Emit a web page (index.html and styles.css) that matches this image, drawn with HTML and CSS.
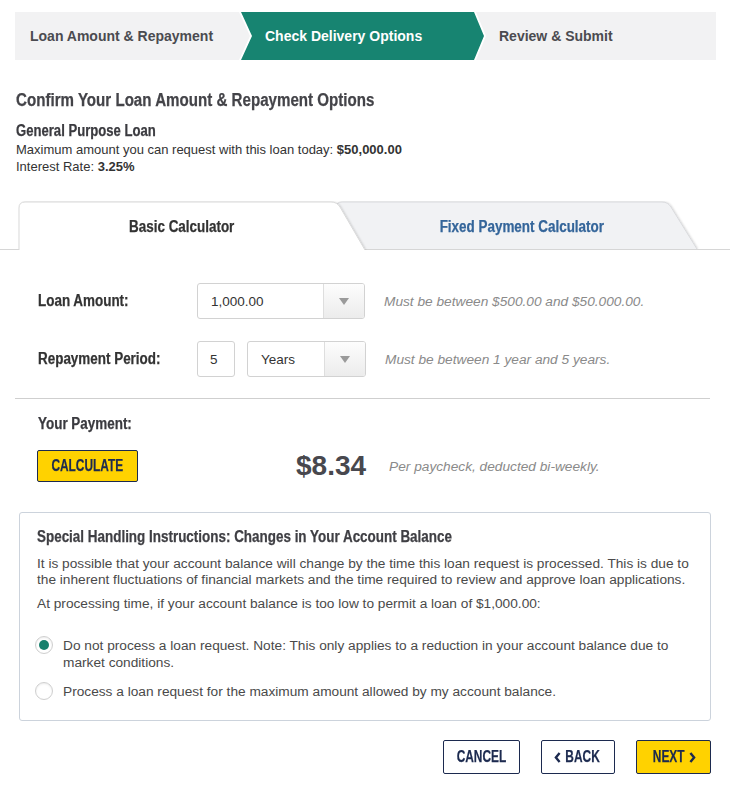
FILE: index.html
```html
<!DOCTYPE html>
<html lang="en">
<head>
<meta charset="utf-8">
<title>Loan Request</title>
<link rel="stylesheet" href="styles.css">
</head>
<body>
<div class="page">
  <nav class="steps">
    <div class="step step-first">Loan Amount &amp; Repayment</div>
    <div class="step-active"><div class="step-active-inner">Check Delivery Options</div></div>
    <div class="step step-last">Review &amp; Submit</div>
  </nav>

  <section class="intro">
    <h1 class="title cond">Confirm Your Loan Amount &amp; Repayment Options</h1>
    <h2 class="loan-name cond">General Purpose Loan</h2>
    <p class="info info-first">Maximum amount you can request with this loan today: <b>$50,000.00</b></p>
    <p class="info">Interest Rate: <b>3.25%</b></p>
  </section>

  <div class="tabs">
    <svg class="tabs-bg" width="730" height="49" viewBox="0 0 730 49" aria-hidden="true">
      <defs>
        <filter id="sh" x="-5%" y="-20%" width="110%" height="140%">
          <feDropShadow dx="1" dy="0" stdDeviation="1.2" flood-color="#000" flood-opacity="0.18"/>
        </filter>
      </defs>
      <path d="M0 48.5H730" stroke="#dcdcdc" stroke-width="1"/>
      <path d="M336 48 V7 Q336 1 342 1 H662 Q668 1 671 6 L697 48 Z" fill="#f1f2f4" filter="url(#sh)"/>
      <path d="M336 48 V7 Q336 1 342 1 H662 Q668 1 671 6 L697 48" fill="none" stroke="#d9dadd" stroke-width="1"/>
      <path d="M0 48.5H19 M697 48.5H730 M340 48.5H697" stroke="#d6d6d6" stroke-width="1"/>
      <path d="M19 49 V7 Q19 1 25 1 H331 Q337 1 340 6 L365 49 Z" fill="#fff" filter="url(#sh)"/>
      <path d="M19 49 V7 Q19 1 25 1 H331 Q337 1 340 6 L365 49" fill="none" stroke="#dadada" stroke-width="1"/>
    </svg>
    <div class="tab tab-active"><span class="cond cond-c">Basic Calculator</span></div>
    <div class="tab tab-inactive"><span class="cond cond-c">Fixed Payment Calculator</span></div>
  </div>

  <section class="calc">
    <div class="form-row">
      <div class="form-label"><span class="cond">Loan Amount:</span></div>
      <div class="select select-wide">
        <span class="select-value">1,000.00</span>
        <span class="select-arrow"></span>
      </div>
      <div class="hint">Must be between $500.00 and $50.000.00.</div>
    </div>
    <div class="form-row form-row-2">
      <div class="form-label"><span class="cond">Repayment Period:</span></div>
      <div class="num-input">5</div>
      <div class="select select-narrow">
        <span class="select-value">Years</span>
        <span class="select-arrow"></span>
      </div>
      <div class="hint">Must be between 1 year and 5 years.</div>
    </div>
  </section>

  <hr class="divider">

  <section class="payment">
    <div class="payment-label"><span class="cond">Your Payment:</span></div>
    <div class="payment-row">
      <button class="btn btn-yellow btn-calc"><span class="cond cond-c btn-text">CALCULATE</span></button>
      <span class="amount">$8.34</span>
      <span class="amount-note">Per paycheck, deducted bi-weekly.</span>
    </div>
  </section>

  <section class="notice">
    <h3 class="notice-title"><span class="cond">Special Handling Instructions: Changes in Your Account Balance</span></h3>
    <p class="notice-text">It is possible that your account balance will change by the time this loan request is processed. This is due to the inherent fluctuations of financial markets and the time required to review and approve loan applications.</p>
    <p class="notice-text notice-text-2">At processing time, if your account balance is too low to permit a loan of $1,000.00:</p>
    <div class="radios">
      <label class="radio-row">
        <span class="radio radio-checked"></span>
        <span class="radio-text">Do not process a loan request. Note: This only applies to a reduction in your account balance due to market conditions.</span>
      </label>
      <label class="radio-row">
        <span class="radio"></span>
        <span class="radio-text">Process a loan request for the maximum amount allowed by my account balance.</span>
      </label>
    </div>
  </section>

  <div class="actions">
    <button class="btn btn-outline btn-cancel"><span class="cond cond-c btn-text">CANCEL</span></button>
    <button class="btn btn-outline btn-back"><svg width="7" height="11" viewBox="0 0 7 11" aria-hidden="true"><path d="M5.6 1 L1.9 5.5 L5.6 10" fill="none" stroke="#1c2a4f" stroke-width="2.4"/></svg><span class="cond cond-c btn-text">BACK</span></button>
    <button class="btn btn-yellow btn-next"><span class="cond cond-c btn-text">NEXT</span><svg width="7" height="11" viewBox="0 0 7 11" aria-hidden="true"><path d="M1.4 1 L5.1 5.5 L1.4 10" fill="none" stroke="#1c2a4f" stroke-width="2.4"/></svg></button>
  </div>
</div>
</body>
</html>
```

FILE: styles.css
```css
* { box-sizing: border-box; margin: 0; padding: 0; }

body {
  width: 730px;
  font-family: "Liberation Sans", Arial, sans-serif;
  color: #333;
  background: #fff;
}

/* condensed bold headline face */
.cond {
  display: inline-block;
  font-family: "Liberation Sans", Arial, sans-serif;
  font-weight: bold;
  white-space: nowrap;
  -webkit-text-stroke: 0.25px currentColor;
  transform: scaleX(0.84);
  transform-origin: left center;
}
.cond-c { transform-origin: center center; }

.page { padding-top: 12px; }

/* Steps */
.steps {
  display: flex;
  height: 48px;
  margin: 0 14px 0 15px;
  background: #f2f2f3;
  font-weight: bold;
  font-size: 14px;
  color: #4b4b50;
}
.step { display: flex; align-items: center; }
.step-first { width: 224px; padding-left: 15px; }
.step-active {
  width: 248px;
  background: #fff;
  clip-path: polygon(0 0, 237px 0, 247px 50%, 237px 100%, 0 100%, 11px 50%);
}
.step-active-inner {
  height: 100%;
  background: #178471;
  color: #fff;
  display: flex;
  align-items: center;
  padding-left: 26px;
  clip-path: polygon(2px 0, 235px 0, 245px 50%, 235px 100%, 2px 100%, 13px 50%);
}
.step-last { padding-left: 12px; }

/* Intro */
.intro { padding: 0 16px; }
.title {
  display: block;
  margin-top: 30px;
  font-size: 18px;
  line-height: 20px;
  color: #444449;
}
.loan-name {
  display: block;
  margin-top: 12px;
  font-size: 15.6px;
  line-height: 18px;
  color: #3a3a3f;
}
.info {
  font-size: 13px;
  line-height: 17px;
  color: #333;
}
.info-first { margin-top: 1px; }

/* Tabs */
.tabs {
  position: relative;
  margin-top: 26px;
  height: 49px;
  display: flex;
}
.tabs-bg { position: absolute; left: 0; top: 0; }
.tab {
  position: relative;
  display: flex;
  align-items: center;
  justify-content: center;
  padding-top: 2px;
  font-size: 16px;
}
.tab-active { width: 326px; margin-left: 19px; color: #333; }
.tab-inactive { width: 353px; color: #34659a; }

/* Calculator */
.calc { padding-top: 33px; }
.form-row {
  display: flex;
  align-items: center;
  padding-left: 38px;
  height: 36px;
}
.form-row-2 { margin-top: 22px; }
.form-label {
  width: 159px;
  font-size: 16px;
  color: #333;
}
.select {
  display: flex;
  height: 36px;
  border: 1px solid #d2d2d2;
  border-radius: 3px;
  overflow: hidden;
  background: #fff;
}
.select-wide { width: 168px; }
.select-narrow { width: 119px; margin-left: 12px; }
.select-value {
  flex: 1;
  display: flex;
  align-items: center;
  padding-left: 13px;
  font-size: 13.5px;
  color: #333;
}
.select-arrow {
  width: 41px;
  border-left: 1px solid #dedede;
  background: linear-gradient(#fdfdfd, #ececec);
  display: flex;
  align-items: center;
  justify-content: center;
}
.select-arrow::after {
  content: "";
  border-left: 5px solid transparent;
  border-right: 5px solid transparent;
  border-top: 7px solid #9a9a9a;
}
.num-input {
  width: 38px;
  height: 36px;
  border: 1px solid #d2d2d2;
  border-radius: 3px;
  display: flex;
  align-items: center;
  padding-left: 12px;
  font-size: 13.5px;
}
.hint {
  margin-left: 19px;
  font-size: 13.7px;
  font-style: italic;
  color: #8a8a8a;
}

.divider {
  border: 0;
  border-top: 1px solid #cfcfcf;
  margin: 21px 20px 0 15px;
}

/* Payment */
.payment { padding-left: 37px; }
.payment-label {
  margin-top: 16px;
  font-size: 16px;
  line-height: 18px;
  color: #3a3a3f;
  padding-left: 1px;
}
.payment-row {
  margin-top: 17px;
  display: flex;
  align-items: center;
}
.btn {
  display: inline-flex;
  align-items: center;
  justify-content: center;
  gap: 2px;
  font-family: "Liberation Sans", Arial, sans-serif;
  font-size: 17px;
  color: #1c2a4f;
  border: 1px solid #1c2a4f;
  border-radius: 2px;
  background: #fff;
  cursor: pointer;
}
.btn-text { transform: scaleX(0.7); margin: 0 -5px; }
.btn-yellow { background: #ffd200; }
.btn-calc { width: 101px; height: 32px; }
.amount {
  margin-left: 158px;
  font-size: 28px;
  font-weight: bold;
  color: #48484e;
}
.amount-note {
  margin-left: 23px;
  font-size: 13.7px;
  font-style: italic;
  color: #8a8a8a;
}

/* Notice */
.notice {
  margin: 30px 19px 0 19px;
  border: 1px solid #ccd3dc;
  border-radius: 3px;
  padding: 14px 16px 20px 17px;
}
.notice-title {
  font-size: 16px;
  line-height: 20px;
  color: #3f3f44;
}
.notice-text {
  margin-top: 9px;
  font-size: 13.7px;
  line-height: 16px;
  color: #4a4a4a;
}
.notice-text-2 { margin-top: 8px; }
.radios {
  margin-top: 25px;
  display: flex;
  flex-direction: column;
  gap: 12px;
}
.radio-row {
  display: flex;
  align-items: flex-start;
  margin-left: -2px;
}
.radio {
  flex: none;
  width: 18px;
  height: 18px;
  margin-top: -1px;
  border-radius: 50%;
  border: 1px solid #cfcfcf;
  background: #fff;
  box-shadow: inset 0 1px 2px rgba(0,0,0,0.08);
  display: flex;
  align-items: center;
  justify-content: center;
}
.radio-checked::after {
  content: "";
  width: 10px;
  height: 10px;
  border-radius: 50%;
  background: #17806d;
}
.radio-text {
  margin-left: 10px;
  font-size: 13.7px;
  line-height: 17px;
  color: #4a4a4a;
}

/* Actions */
.actions {
  margin-top: 19px;
  display: flex;
  justify-content: flex-end;
  gap: 21px;
  padding-right: 19px;
}
.actions .btn { height: 34px; }
.btn-cancel { width: 77px; }
.btn-back { width: 74px; }
.btn-next { width: 75px; }
```
